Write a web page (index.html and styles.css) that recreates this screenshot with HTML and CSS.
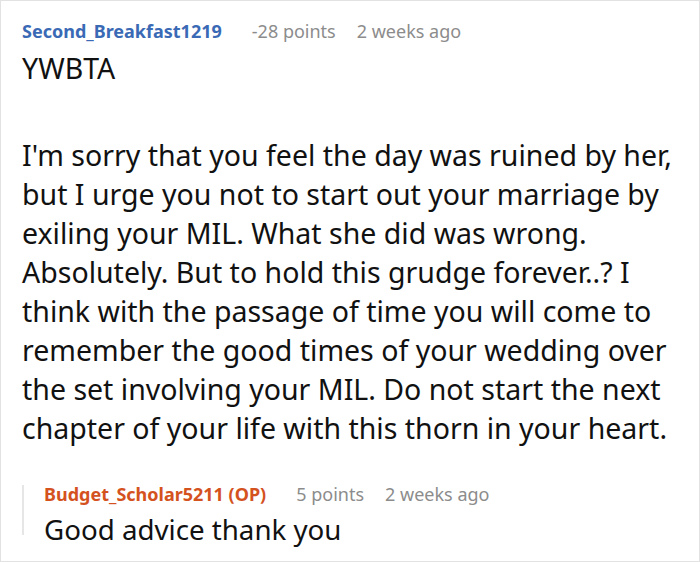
FILE: index.html
```html
<!DOCTYPE html>
<html>
<head>
<meta charset="utf-8">
<link rel="stylesheet" href="styles.css">
</head>
<body>
<div class="card">
  <div class="comment">
    <div class="meta">
      <span class="user">Second_Breakfast1219</span>
      <span class="info">-28 points</span>
      <span class="info">2 weeks ago</span>
    </div>
    <div class="body">
      <p>YWBTA</p>
      <p>I'm sorry that you feel the day was ruined by her, but I urge you not to start out your marriage by exiling your MIL. What she did was wrong. Absolutely. But to hold this grudge forever..? I think with the passage of time you will come to remember the good times of your wedding over the set involving your MIL. Do not start the next chapter of your life with this thorn in your heart.</p>
    </div>
  </div>
  <div class="reply">
    <div class="meta">
      <span class="user op">Budget_Scholar5211 (OP)</span>
      <span class="info">5 points</span>
      <span class="info">2 weeks ago</span>
    </div>
    <div class="body">
      <p>Good advice thank you</p>
    </div>
  </div>
</div>
</body>
</html>
```
FILE: styles.css
```css
html, body {
  margin: 0;
  padding: 0;
  background: #fff;
}
.card {
  box-sizing: border-box;
  width: 700px;
  height: 562px;
  border: 1px solid #e2e2e2;
  padding: 18px 20px 0 21px;
  font-family: "Noto Sans", sans-serif;
  color: #111;
}
.meta {
  display: flex;
  align-items: baseline;
  font-size: 18px;
  line-height: 24px;
}
.user {
  font-weight: 700;
  color: #3a6ab5;
  margin-right: 30px;
}
.info {
  color: #8c8c8c;
  margin-right: 21px;
}
.body {
  font-size: 28.5px;
  line-height: 39px;
}
.body p {
  margin: 0;
}
.comment .body {
  margin-top: 6px;
}
.comment .body p + p {
  margin-top: 48px;
}
.reply {
  margin-top: 44px;
  height: 50px;
  border-left: 2px solid #e6e6e6;
  padding-left: 20px;
}
.reply .meta {
  margin-top: -7px;
  line-height: 18px;
}
.reply .body {
  margin-top: 11px;
  font-size: 27.7px;
  line-height: 30px;
}
.user.op {
  color: #d4521e;
}
```
